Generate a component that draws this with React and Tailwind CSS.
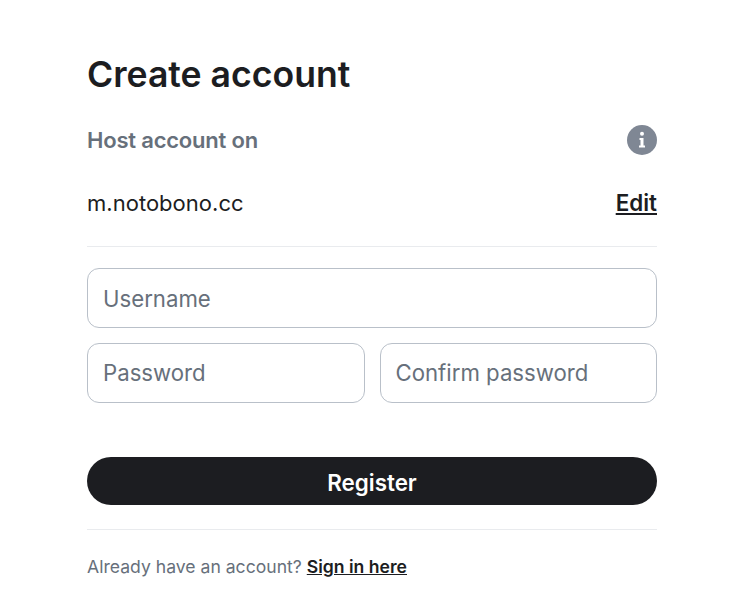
export default function App() {
  return (
    <div className="w-[742px] h-[613px] bg-white overflow-hidden font-['Inter',sans-serif] text-[#1c1d21] pl-[87px] pr-[85px] pt-[54px]">
      <h1 className="text-[35.6px] leading-[42px] font-semibold">Create account</h1>
      <div className="flex items-center justify-between mt-[29px] h-[30px]">
        <span className="text-[22px] font-semibold text-[#67707b] tracking-[-0.2px]">Host account on</span>
        <svg width="30" height="30" viewBox="0 0 30 30">
          <circle cx="15" cy="15" r="15" fill="#7f8794" />
          <circle cx="15" cy="8.800" r="2" fill="#fff" />
          <path d="M12.500 13H16.500V20.500H18V22.500H12V20.500H13.500V15H12.500z" fill="#fff" />
        </svg>
      </div>
      <div className="flex items-center justify-between mt-[33px] h-[30px]">
        <span className="text-[22px] tracking-[0.02px]">m.notobono.cc</span>
        <a className="text-[22.4px] font-semibold underline">Edit</a>
      </div>
      <div className="h-px bg-[#e9ebee] mt-[28px]" />
      <input placeholder="Username" className="mt-[21px] w-full h-[60px] border border-[#b9c0c9] rounded-[12px] px-[15px] text-[22.2px] placeholder:text-[#67707b]" />
      <div className="flex gap-[15px] mt-[15px]">
        <input placeholder="Password" className="w-[278px] min-w-0 h-[60px] border border-[#b9c0c9] rounded-[12px] px-[15px] pb-[2px] text-[22.2px] placeholder:text-[#67707b]" />
        <input placeholder="Confirm password" className="w-[277px] min-w-0 h-[60px] border border-[#b9c0c9] rounded-[12px] pl-[14.5px] pr-[15px] pb-[2px] text-[22.2px] placeholder:text-[#67707b]" />
      </div>
      <button className="mt-[54px] w-full h-[48px] pt-[3px] rounded-full bg-[#1c1d21] text-white text-[22.4px] font-semibold">Register</button>
      <div className="h-px bg-[#e9ebee] mt-[24px]" />
      <p className="mt-[24px] text-[17.6px] leading-[26px] text-[#67707b]">Already have an account? <a className="font-semibold text-[#1c1d21] underline">Sign in here</a></p>
    </div>
  );
}
